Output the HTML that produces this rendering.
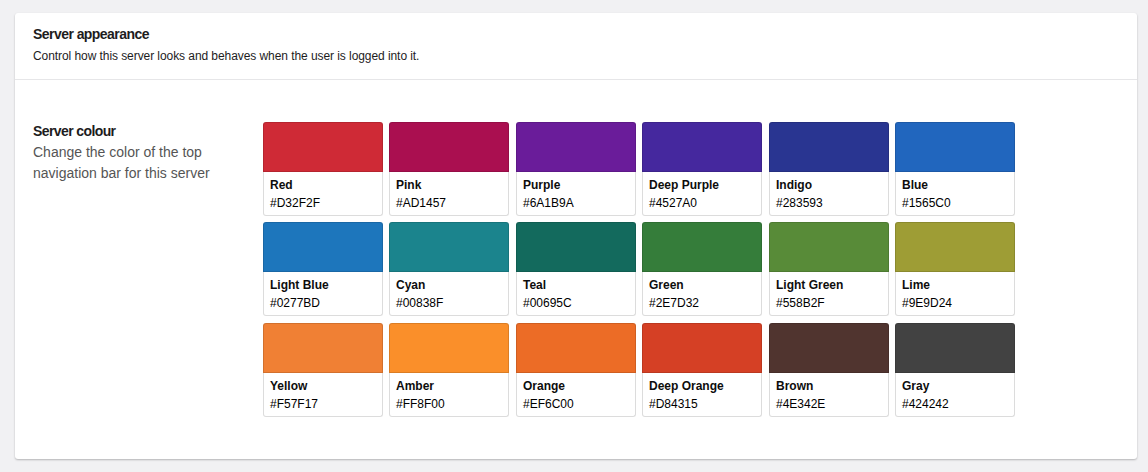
<!DOCTYPE html>
<html><head><meta charset="utf-8"><style>
html,body{margin:0;padding:0;}
body{width:1148px;height:472px;background:#f1f1f3;position:relative;overflow:hidden;font-family:"Liberation Sans",sans-serif;}
.panel{position:absolute;left:15px;top:13px;width:1122px;height:446px;background:#fff;border-radius:3px;box-shadow:0 1px 2px rgba(0,0,0,.25);}
.sep{position:absolute;left:15px;top:79px;width:1122px;height:1px;background:#e6e6e8;}
.t{position:absolute;white-space:nowrap;}
.h1{left:33px;top:26px;font-size:14px;letter-spacing:-0.55px;font-weight:bold;color:#1d1c1d;}
.d1{left:33px;top:49px;font-size:12px;letter-spacing:-0.07px;color:#1d1c1d;}
.h2{left:33px;top:123px;font-size:14px;letter-spacing:-0.6px;font-weight:bold;color:#1d1c1d;}
.d2{left:33px;top:142px;font-size:14px;line-height:21px;color:#555;}
.card{position:absolute;width:120px;height:94px;}
.sw{position:absolute;left:0;top:0;width:120px;height:50px;box-sizing:border-box;border:1px solid rgba(0,0,0,.12);border-radius:3px 3px 0 0;}
.bd{position:absolute;left:0;top:50px;width:120px;height:44px;box-sizing:border-box;border:1px solid #dcdcdc;border-top:none;border-radius:0 0 3px 3px;background:#fff;}
.nm{position:absolute;left:6px;top:6px;font-size:12px;font-weight:bold;color:#0d0d0d;}
.hx{position:absolute;left:6px;top:24px;font-size:12px;color:#000;}
</style></head><body>
<div class="panel"></div>
<div class="sep"></div>
<div class="t h1">Server appearance</div>
<div class="t d1">Control how this server looks and behaves when the user is logged into it.</div>
<div class="t h2">Server colour</div>
<div class="t d2">Change the color of the top<br>navigation bar for this server</div>
<div class="card" style="left:263px;top:122px"><div class="sw" style="background:#CF2A36"></div><div class="bd"><div class="nm">Red</div><div class="hx">#D32F2F</div></div></div><div class="card" style="left:389px;top:122px"><div class="sw" style="background:#AA0F50"></div><div class="bd"><div class="nm">Pink</div><div class="hx">#AD1457</div></div></div><div class="card" style="left:516px;top:122px"><div class="sw" style="background:#6A1C9A"></div><div class="bd"><div class="nm">Purple</div><div class="hx">#6A1B9A</div></div></div><div class="card" style="left:642px;top:122px"><div class="sw" style="background:#45289E"></div><div class="bd"><div class="nm">Deep Purple</div><div class="hx">#4527A0</div></div></div><div class="card" style="left:769px;top:122px"><div class="sw" style="background:#293591"></div><div class="bd"><div class="nm">Indigo</div><div class="hx">#283593</div></div></div><div class="card" style="left:895px;top:122px"><div class="sw" style="background:#2166BE"></div><div class="bd"><div class="nm">Blue</div><div class="hx">#1565C0</div></div></div><div class="card" style="left:263px;top:222px"><div class="sw" style="background:#1D76BC"></div><div class="bd"><div class="nm">Light Blue</div><div class="hx">#0277BD</div></div></div><div class="card" style="left:389px;top:222px"><div class="sw" style="background:#1B848D"></div><div class="bd"><div class="nm">Cyan</div><div class="hx">#00838F</div></div></div><div class="card" style="left:516px;top:222px"><div class="sw" style="background:#136A5D"></div><div class="bd"><div class="nm">Teal</div><div class="hx">#00695C</div></div></div><div class="card" style="left:642px;top:222px"><div class="sw" style="background:#357D3A"></div><div class="bd"><div class="nm">Green</div><div class="hx">#2E7D32</div></div></div><div class="card" style="left:769px;top:222px"><div class="sw" style="background:#588B38"></div><div class="bd"><div class="nm">Light Green</div><div class="hx">#558B2F</div></div></div><div class="card" style="left:895px;top:222px"><div class="sw" style="background:#9E9D35"></div><div class="bd"><div class="nm">Lime</div><div class="hx">#9E9D24</div></div></div><div class="card" style="left:263px;top:323px"><div class="sw" style="background:#F08034"></div><div class="bd"><div class="nm">Yellow</div><div class="hx">#F57F17</div></div></div><div class="card" style="left:389px;top:323px"><div class="sw" style="background:#FA8F2A"></div><div class="bd"><div class="nm">Amber</div><div class="hx">#FF8F00</div></div></div><div class="card" style="left:516px;top:323px"><div class="sw" style="background:#EC6C26"></div><div class="bd"><div class="nm">Orange</div><div class="hx">#EF6C00</div></div></div><div class="card" style="left:642px;top:323px"><div class="sw" style="background:#D54025"></div><div class="bd"><div class="nm">Deep Orange</div><div class="hx">#D84315</div></div></div><div class="card" style="left:769px;top:323px"><div class="sw" style="background:#50342F"></div><div class="bd"><div class="nm">Brown</div><div class="hx">#4E342E</div></div></div><div class="card" style="left:895px;top:323px"><div class="sw" style="background:#424242"></div><div class="bd"><div class="nm">Gray</div><div class="hx">#424242</div></div></div>
</body></html>
